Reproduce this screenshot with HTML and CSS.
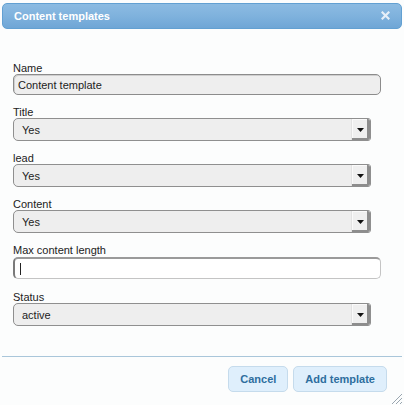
FILE: index.html
```html
<!DOCTYPE html>
<html lang="en">
  <head>
    <meta charset="UTF-8" />
    <title>Content templates</title>
    <link rel="stylesheet" href="styles.css">
  </head>
  <body>
    <div class="dialog">
      <div class="titlebar">
        <span class="title">Content templates</span>
        <svg class="close" width="9" height="9" viewBox="0 0 9 9">
          <path d="M1.5 1.5 L7.5 7.5 M7.5 1.5 L1.5 7.5" stroke="#e6eff8" stroke-width="2.2" stroke-linecap="square" />
        </svg>
      </div>

      <form class="form">
        <div class="field">
          <label>Name</label>
          <div class="input readonly">Content template</div>
        </div>

        <div class="field">
          <label>Title</label>
          <div class="select">
            <span class="value">Yes</span>
            <span class="arrow"><svg width="7" height="5" viewBox="0 0 7 5"><path d="M0 1 H7 L3.5 5 Z" fill="#111" /></svg></span>
          </div>
        </div>

        <div class="field">
          <label>lead</label>
          <div class="select">
            <span class="value">Yes</span>
            <span class="arrow"><svg width="7" height="5" viewBox="0 0 7 5"><path d="M0 1 H7 L3.5 5 Z" fill="#111" /></svg></span>
          </div>
        </div>

        <div class="field">
          <label>Content</label>
          <div class="select">
            <span class="value">Yes</span>
            <span class="arrow"><svg width="7" height="5" viewBox="0 0 7 5"><path d="M0 1 H7 L3.5 5 Z" fill="#111" /></svg></span>
          </div>
        </div>

        <div class="field field-max">
          <label>Max content length</label>
          <div class="input focus"><span class="caret"></span></div>
        </div>

        <div class="field">
          <label>Status</label>
          <div class="select">
            <span class="value">active</span>
            <span class="arrow"><svg width="7" height="5" viewBox="0 0 7 5"><path d="M0 1 H7 L3.5 5 Z" fill="#111" /></svg></span>
          </div>
        </div>
      </form>

      <div class="buttonpane">
        <button type="button" class="btn">Cancel</button>
        <button type="button" class="btn">Add template</button>
      </div>

      <!-- ручка изменения размера -->
      <svg class="resize" width="13" height="13" viewBox="0 0 13 13">
        <path d="M12 2 L2 12 M12 6 L6 12 M12 10 L10 12" stroke="#9aa6b0" stroke-width="1" />
      </svg>
    </div>
  </body>
</html>
```

FILE: styles.css
```css
body {
  margin: 0;
  background: #fcfdfd;
  font-family: "Liberation Sans", Arial, sans-serif;
  font-size: 11px;
  color: #222;
  width: 404px;
  height: 405px;
  overflow: hidden;
}

.dialog {
  position: relative;
  height: 405px;
  padding: 3px 2px 0;
  box-sizing: border-box;
}

/* Заголовок диалога */
.titlebar {
  height: 26px;
  box-sizing: border-box;
  border: 1px solid #62a0d2;
  border-radius: 5px;
  background: linear-gradient(to bottom, #8cbbe2 0%, #7fb2dd 50%, #6fa6d6 100%);
  display: flex;
  align-items: center;
  justify-content: space-between;
  padding: 0 11px 1px 11px;
  color: #fff;
  font-weight: bold;
}

.form {
  margin: 0;
  padding: 33px 21px 0 11px;
}

.field {
  margin-bottom: 11px;
}

.field-max {
  margin-top: 1px;
  margin-bottom: 12px;
}

label {
  display: block;
  line-height: 12px;
  color: #222;
}

.input {
  width: 368px;
  height: 21px;
  box-sizing: border-box;
  border: 1px solid #8c8c8c;
  border-radius: 5px;
  padding: 0 4px;
  display: flex;
  align-items: center;
  color: #222;
}

.readonly {
  background: #eeeeee;
  box-shadow: inset 1px 1px 0 #cfcfcf;
}

.focus {
  background: #fff;
  height: 22px;
  margin-top: 1px;
  border-color: #c4c4c4;
  border-left: 2px solid #7a7a7a;
  border-top: 2px solid #9a9a9a;
}

.caret {
  display: block;
  width: 1px;
  height: 12px;
  margin-left: 1px;
  background: #222;
}

.select {
  width: 358px;
  height: 23px;
  box-sizing: border-box;
  border: 1px solid #8f8f8f;
  border-radius: 5px 3px 3px 5px;
  background: #eeeeee;
  display: flex;
  align-items: stretch;
  overflow: hidden;
}

.select .value {
  flex: 1;
  display: flex;
  align-items: center;
  padding-left: 8px;
}

.select .arrow {
  width: 16px;
  display: flex;
  align-items: center;
  justify-content: center;
  padding-right: 2px;
  background: #efefef;
  border-left: 1px solid #e2e2e2;
  box-shadow: inset -3px -2px 0 #8d8d8d, inset 1px 1px 0 #fafafa;
}

.select .arrow svg {
  margin-top: -1px;
}

/* Панель кнопок */
.buttonpane {
  position: absolute;
  left: 2px;
  right: 2px;
  top: 356px;
  border-top: 1px solid #a9c6da;
  display: flex;
  justify-content: flex-end;
  gap: 5px;
  padding: 9px 15px 0 0;
}

.btn {
  height: 26px;
  padding: 0 11px;
  border: 1px solid #c5dbec;
  border-radius: 5px;
  background: #dfeffc;
  color: #2e6e9e;
  font-family: "Liberation Sans", Arial, sans-serif;
  font-size: 11px;
  font-weight: bold;
}

.resize {
  position: absolute;
  right: 1px;
  bottom: 0;
}
```
